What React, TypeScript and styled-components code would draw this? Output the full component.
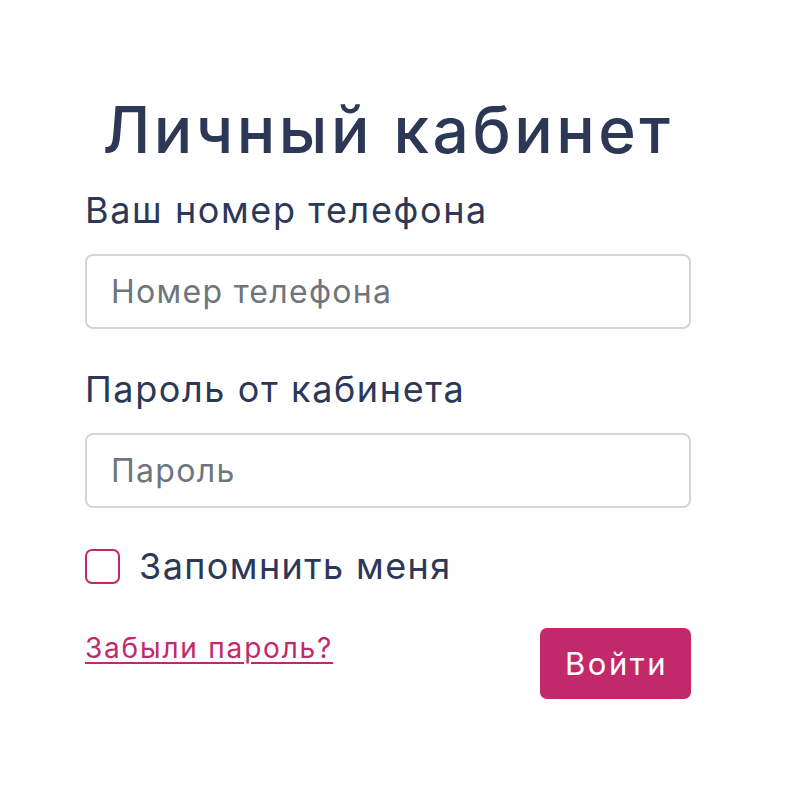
import React from "react";
import styled, { createGlobalStyle } from "styled-components";

const GlobalStyle = createGlobalStyle`
  html, body {
    margin: 0;
    padding: 0;
    background: #ffffff;
  }
  body {
    font-family: Inter, "Open Sans", "DejaVu Sans", sans-serif;
    color: #2d3857;
  }
  * { box-sizing: border-box; }
`;

const Page = styled.div`
  width: 786px;
  min-height: 808px;
  padding: 90px 0 0 85px;
`;

const Form = styled.form`
  width: 606px;
  display: flex;
  flex-direction: column;
`;

const Title = styled.h1`
  margin: 0;
  font-size: 64px;
  line-height: 80px;
  font-weight: 500;
  text-align: center;
  color: #2d3857;
  letter-spacing: 3.5px;
`;

const Field = styled.div<{ $top: number }>`
  display: flex;
  flex-direction: column;
  margin-top: ${(p) => p.$top}px;
`;

const Label = styled.label`
  font-size: 36px;
  line-height: 44px;
  font-weight: 400;
  color: #2d3857;
  margin-bottom: 22px;
  letter-spacing: 1.6px;
`;

const Input = styled.input`
  width: 100%;
  height: 75px;
  border: 2px solid #d2d6db;
  border-radius: 8px;
  padding: 0 24px;
  font-family: inherit;
  font-size: 32px;
  color: #2d3857;
  outline: none;
  background: #fff;
  letter-spacing: 1.3px;
  &::placeholder {
    color: #6f757d;
    letter-spacing: 1.3px;
  }
`;

const CheckRow = styled.label`
  display: flex;
  align-items: center;
  gap: 19px;
  margin-top: 36px;
  font-size: 36px;
  line-height: 44px;
  color: #2d3857;
  letter-spacing: 1.4px;
`;

const Box = styled.span`
  width: 35px;
  height: 35px;
  border: 2px solid #c2296b;
  border-radius: 7px;
  flex: none;
`;

const Actions = styled.div`
  display: flex;
  justify-content: space-between;
  align-items: flex-start;
  margin-top: 40px;
`;

const Forgot = styled.a`
  margin-top: 2px;
  font-size: 28px;
  line-height: 36px;
  color: #c2296b;
  text-decoration: underline;
  text-underline-offset: 4px;
  text-decoration-thickness: 2px;
  letter-spacing: 1.8px;
`;

const Submit = styled.button`
  width: 151px;
  height: 71px;
  border: none;
  border-radius: 7px;
  background: #c2296b;
  color: #ffffff;
  font-family: inherit;
  font-size: 31px;
  font-weight: 400;
  letter-spacing: 2.5px;
  padding: 0 0 0 2px;
  cursor: pointer;
`;

export default function App() {
  return (
    <>
      <GlobalStyle />
      <Page>
        <Form onSubmit={(e) => e.preventDefault()}>
          <Title>Личный кабинет</Title>
          <Field $top={18}>
            <Label htmlFor="phone">Ваш номер телефона</Label>
            <Input id="phone" type="tel" placeholder="Номер телефона" />
          </Field>
          <Field $top={38}>
            <Label htmlFor="pass">Пароль от кабинета</Label>
            <Input id="pass" type="password" placeholder="Пароль" />
          </Field>
          <CheckRow>
            <Box />
            Запомнить меня
          </CheckRow>
          <Actions>
            <Forgot href="#">Забыли пароль?</Forgot>
            <Submit type="submit">Войти</Submit>
          </Actions>
        </Form>
      </Page>
    </>
  );
}
